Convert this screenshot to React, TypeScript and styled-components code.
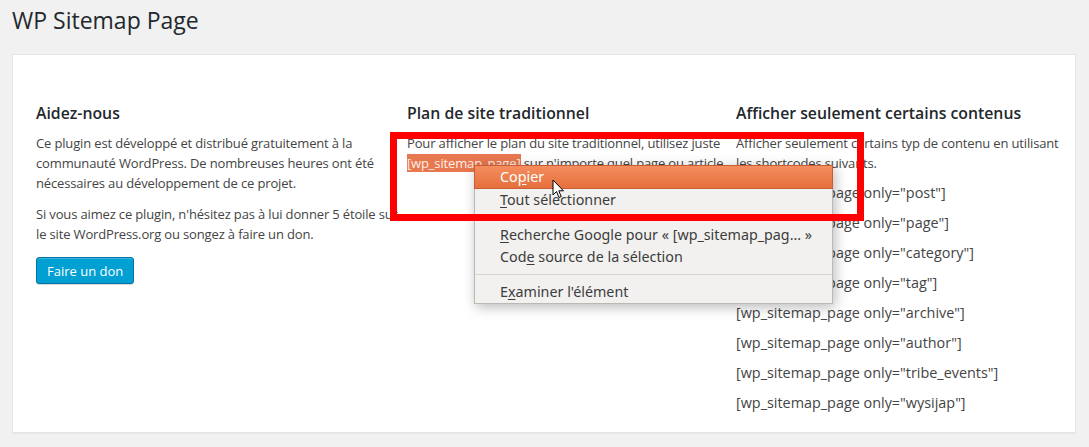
import * as React from "react";
import styled, { createGlobalStyle } from "styled-components";

const GlobalStyle = createGlobalStyle`
  html, body {
    margin: 0;
    padding: 0;
    background: #f1f1f1;
    font-family: "Open Sans", "Liberation Sans", sans-serif;
    color: #444;
  }
`;

const Page = styled.div`
  position: relative;
  width: 1089px;
  height: 447px;
  overflow: hidden;
  padding: 0 13px 0 12px;
  box-sizing: border-box;
`;

const Title = styled.h1`
  margin: 0;
  padding: 6px 0 0;
  font-size: 23px;
  line-height: 29px;
  font-weight: 400;
  color: #23282d;
`;

const Panel = styled.div`
  margin-top: 19px;
  background: #fff;
  border: 1px solid #e5e5e5;
  box-shadow: 0 1px 1px rgba(0, 0, 0, 0.04);
  padding: 46px 8px 19px 23px;
  display: grid;
  grid-template-columns: 371px 329px 1fr;
`;

const Column = styled.div<{ $gap?: number }>`
  padding-right: ${(p) => p.$gap ?? 8}px;
`;

const Heading = styled.h2`
  margin: 0 0 8px;
  font-size: 15.8px;
  line-height: 24px;
  font-weight: 600;
  color: #23282d;
`;

const Text = styled.p<{ $last?: boolean }>`
  margin: 0 0 ${(p) => (p.$last ? 0 : 11)}px;
  font-size: 13px;
  line-height: 20px;
  letter-spacing: -0.15px;
`;

const Selected = styled.span`
  background: #e8784f;
  color: #fdeee8;
`;

const Shortcode = styled.p`
  margin: 10px 0 0;
  font-size: 14.4px;
  line-height: 20px;
`;

const Button = styled.button`
  margin-top: 2px;
  height: 27px;
  padding: 0 10px;
  font-family: inherit;
  font-size: 13px;
  color: #fff;
  background: #00a0d2;
  border: 1px solid #0073aa;
  border-radius: 3px;
  box-shadow: inset 0 1px 0 rgba(120, 200, 230, 0.5), 0 1px 0 rgba(0, 0, 0, 0.15);
`;

const Menu = styled.div`
  position: absolute;
  left: 474px;
  top: 165px;
  width: 357px;
  background: #f2f1f0;
  border: 1px solid #bcb8b2;
  box-shadow: 2px 3px 12px rgba(0, 0, 0, 0.28);
  font-family: "Noto Sans", "DejaVu Sans", sans-serif;
  font-size: 14.3px;
  color: #3c3c3c;
`;

const MenuItem = styled.div<{ $active?: boolean }>`
  height: 22px;
  line-height: 22px;
  padding-left: 25px;
  box-sizing: border-box;
  ${(p) =>
    p.$active
      ? `
    color: #fff;
    background: linear-gradient(#f58d5e, #e66f3d);
    border: 1px solid #c65d33;
    margin: -1px -1px 0;
    line-height: 21px;
    height: 24px;
  `
      : ""}
`;

const Separator = styled.div`
  height: 1px;
  background: #d9d6d2;
  margin: 6px 0;
`;

const Key = styled.span`
  text-decoration: underline;
  text-underline-offset: 2px;
`;

const Annotation = styled.div`
  position: absolute;
  left: 390px;
  top: 132px;
  width: 474px;
  height: 89px;
  box-sizing: border-box;
  border: 7px solid #ff0000;
  pointer-events: none;
`;

const Cursor = styled.svg`
  position: absolute;
  left: 552px;
  top: 179px;
`;

const shortcodes = ["post", "page", "category", "tag", "archive", "author", "tribe_events", "wysijap"];

export default function App() {
  return (
    <Page>
      <GlobalStyle />
      <Title>WP Sitemap Page</Title>
      <Panel>
        <Column>
          <Heading>Aidez-nous</Heading>
          <Text>
            Ce plugin est développé et distribué gratuitement à la communauté WordPress. De nombreuses heures ont été
            nécessaires au développement de ce projet.
          </Text>
          <Text>
            Si vous aimez ce plugin, n'hésitez pas à lui donner 5 étoile sur le site WordPress.org ou songez à faire un
            don.
          </Text>
          <Button>Faire un don</Button>
        </Column>
        <Column $gap={0}>
          <Heading>Plan de site traditionnel</Heading>
          <Text>
            Pour afficher le plan du site traditionnel, utilisez juste <Selected>[wp_sitemap_page]</Selected> sur
            n'importe quel page ou article
          </Text>
        </Column>
        <Column $gap={0}>
          <Heading>Afficher seulement certains contenus</Heading>
          <Text $last>Afficher seulement certains typ de contenu en utilisant les shortcodes suivants.</Text>
          {shortcodes.map((s) => (
            <Shortcode key={s}>[wp_sitemap_page only="{s}"]</Shortcode>
          ))}
        </Column>
      </Panel>

      <Menu>
        <MenuItem $active>
          Co<Key>p</Key>ier
        </MenuItem>
        <MenuItem>
          <Key>T</Key>out sélectionner
        </MenuItem>
        <Separator />
        <MenuItem>
          <Key>R</Key>echerche Google pour « [wp_sitemap_pag… »
        </MenuItem>
        <MenuItem>
          Cod<Key>e</Key> source de la sélection
        </MenuItem>
        <Separator />
        <MenuItem>
          E<Key>x</Key>aminer l'élément
        </MenuItem>
      </Menu>

      <Annotation />

      <Cursor width="13" height="20" viewBox="0 0 13 20">
        <path
          d="M1 1 L1 16 L4.5 12.5 L7 18.5 L9.2 17.6 L6.8 11.8 L11.5 11.8 Z"
          fill="#fff"
          stroke="#000"
          strokeWidth="1"
          strokeLinejoin="round"
        />
      </Cursor>
    </Page>
  );
}
